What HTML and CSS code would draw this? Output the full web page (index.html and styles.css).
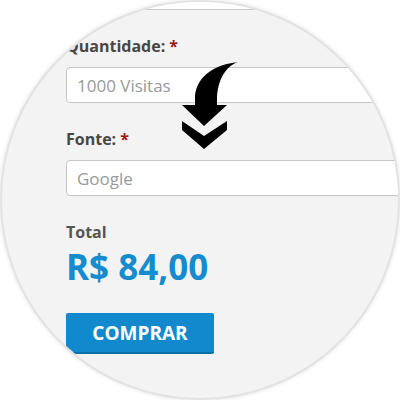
FILE: index.html
```html
<!DOCTYPE html>
<html lang="pt-BR">
<head>
    <meta charset="UTF-8">
    <meta name="viewport" content="width=device-width, initial-scale=1.0">
    <title>Comprar visitas</title>
    <link rel="stylesheet" href="styles.css">
</head>
<body>
    <div class="lens">
        <form class="order">
            <!-- campo anterior, cortado pela lupa -->
            <input class="field field-prev" type="text" placeholder="">

            <label class="label" for="qtd">Quantidade: <span class="req">*</span></label>
            <input class="field" id="qtd" type="text" placeholder="1000 Visitas">

            <label class="label" for="fonte">Fonte: <span class="req">*</span></label>
            <input class="field" id="fonte" type="text" placeholder="Google">

            <p class="total-label">Total</p>
            <p class="total-value">R$ 84,00</p>

            <button class="buy" type="button">COMPRAR</button>
        </form>

        <svg class="arrow" viewBox="0 0 400 400" width="400" height="400" aria-hidden="true">
            <path d="M238 62 C226 66, 217 80, 217 100 L217 105 L227 105 L204 126 L182 105 L195 105 L195 98 C195 84, 205 66, 238 62 Z" fill="#000"/>
            <path d="M182 121 L204 136 L227 121 L227 130 L204 149 L182 130 Z" fill="#000"/>
        </svg>
    </div>
</body>
</html>
```

FILE: styles.css
```css
/* Lupa sobre o formulário de compra */
body {
    margin: 0;
    background-color: #fff;
    font-family: 'Open Sans', 'Liberation Sans', sans-serif;
    color: #444;
}

.lens {
    position: relative;
    width: 396px;
    height: 396px;
    border: 2px solid #e3e3e3;
    border-radius: 50%;
    overflow: hidden;
    background-color: #f3f3f3;
    box-shadow: 0 0 4px rgba(0, 0, 0, 0.12);
}

.order {
    display: flex;
    flex-direction: column;
    align-items: flex-start;
    padding-left: 64px;
}

.field {
    box-sizing: border-box;
    width: 340px;
    height: 36px;
    margin: 0;
    padding: 0 10px;
    border: 1px solid #c6c6c6;
    border-radius: 4px;
    background-color: #fff;
    font-family: inherit;
    font-size: 17px;
    color: #555;
}

.field::placeholder {
    color: #9a9a9a;
}

.field-prev {
    margin-top: -28px;
}

.label {
    margin: 26px 0 11px;
    font-size: 16px;
    line-height: 20px;
    font-weight: bold;
    color: #474747;
}

.req {
    color: #9e1a1a;
}

.total-label {
    margin: 26px 0 0;
    font-size: 16px;
    line-height: 20px;
    font-weight: bold;
    color: #555;
}

.total-value {
    margin: 5px 0 0;
    font-size: 35px;
    line-height: 40px;
    font-weight: bold;
    color: #168bcd;
}

.buy {
    margin-top: 26px;
    width: 148px;
    height: 41px;
    padding: 0;
    border: none;
    border-bottom: 2px solid #0b70aa;
    border-radius: 2px;
    background-color: #1289cd;
    color: #fff;
    font-family: inherit;
    font-size: 19px;
    font-weight: bold;
    cursor: pointer;
}

.arrow {
    position: absolute;
    top: -2px;
    left: -2px;
    pointer-events: none;
}
```
